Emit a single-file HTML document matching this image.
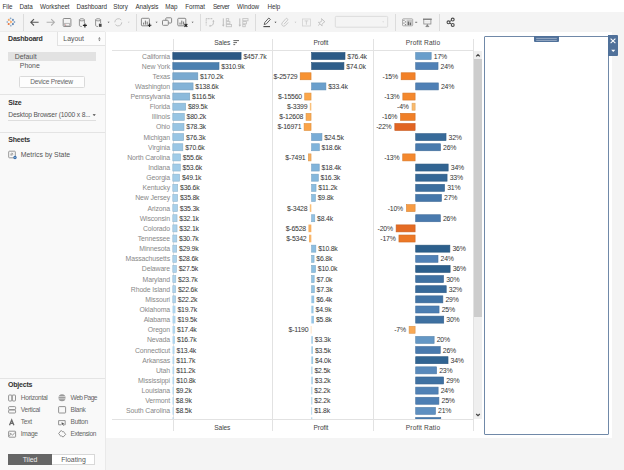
<!DOCTYPE html>
<html><head><meta charset="utf-8">
<style>
*{margin:0;padding:0;box-sizing:border-box}
html,body{width:624px;height:470px;overflow:hidden;background:#f4f4f4;font-family:"Liberation Sans",sans-serif;color:#333}
.a{position:absolute}
#menu{left:0;top:0;width:624px;height:11.5px;background:#fff}
.mi{position:absolute;top:2px;font-size:6.3px;line-height:9px;color:#333;letter-spacing:-0.05px}
#tool{left:0;top:11.5px;width:624px;height:20.5px;background:#f4f4f4}
.sep{position:absolute;top:14px;width:1px;height:16.5px;background:#dcdcdc}
#panel{left:0;top:32px;width:106px;height:438px;background:#f9f9f9;border-right:1px solid #e9e9e9}
#canvas{left:106px;top:32px;width:506px;height:406px;background:#fff}
.lab{position:absolute;right:454px;font-size:6.9px;line-height:10px;color:#888;white-space:nowrap;letter-spacing:-0.12px}
.val{position:absolute;font-size:6.9px;line-height:10px;color:#333;white-space:nowrap;letter-spacing:-0.2px}
.valr{position:absolute;font-size:6.9px;line-height:10px;color:#333;white-space:nowrap;letter-spacing:-0.2px;text-align:right}
.bar{position:absolute;height:7.6px}
#rows{left:0;top:51px;width:624px;height:368.5px;overflow:hidden}
#rows .lab,#rows .val,#rows .valr,#rows .bar{margin-top:-51px}
.hl{position:absolute;height:1px;background:#e2e2e2}
.vl{position:absolute;width:1px;background:#e2e2e2}
.hdr{position:absolute;font-size:6.6px;line-height:10px;color:#444;white-space:nowrap;letter-spacing:-0.1px}
.pt{position:absolute;font-size:6.9px;line-height:10px;color:#555;white-space:nowrap}
.pb{position:absolute;font-size:7px;line-height:10px;color:#333;font-weight:bold;white-space:nowrap;letter-spacing:-0.22px}
</style></head><body>
<div id="menu" class="a">
<div class="mi" style="left:2.5px">File</div>
<div class="mi" style="left:19.6px">Data</div>
<div class="mi" style="left:40px">Worksheet</div>
<div class="mi" style="left:76.6px">Dashboard</div>
<div class="mi" style="left:113.3px">Story</div>
<div class="mi" style="left:135.4px">Analysis</div>
<div class="mi" style="left:165.3px">Map</div>
<div class="mi" style="left:185.3px">Format</div>
<div class="mi" style="left:212.9px;letter-spacing:-0.35px">Server</div>
<div class="mi" style="left:237px">Window</div>
<div class="mi" style="left:267.5px">Help</div>
</div>
<div id="tool" class="a"></div>
<div class="sep" style="left:23px"></div>
<div class="sep" style="left:136px"></div>
<div class="sep" style="left:199.5px"></div>
<div class="sep" style="left:255px"></div>
<div class="sep" style="left:395px"></div>
<div class="sep" style="left:439px"></div>
<svg class="a" style="left:0;top:0" width="624" height="32" viewBox="0 0 624 32">
<g stroke-linecap="square">
<!-- tableau logo -->
<circle cx="8.8" cy="19.9" r="1.05" fill="#f4a868"/>
<path d="M10.2 20.3L12.6 21.9L10.2 23.5Z" fill="#f5a460"/>
<circle cx="8.7" cy="24" r="1.05" fill="#e8743a"/>
<circle cx="10.6" cy="18.3" r="0.9" fill="#8aa8c8"/>
<circle cx="12.9" cy="19.9" r="1.05" fill="#6e92bc"/>
<circle cx="14.4" cy="22" r="0.9" fill="#8aa8c8"/>
<circle cx="12.9" cy="24.1" r="1.05" fill="#5a82b2"/>
<circle cx="10.8" cy="25.7" r="0.9" fill="#9ab2cc"/>
<circle cx="7.3" cy="22" r="0.9" fill="#a2bad2"/>
</g>
<!-- back arrow -->
<path d="M38.6 22.3H30.8M34 19.1L30.8 22.3L34 25.5" fill="none" stroke="#555" stroke-width="1.1"/>
<!-- forward arrow -->
<path d="M46.6 22.3H54.4M51.2 19.1L54.4 22.3L51.2 25.5" fill="none" stroke="#b0b0b0" stroke-width="1.1"/>
<!-- save -->
<rect x="63.2" y="18.5" width="7.7" height="8" rx="0.9" fill="none" stroke="#8a8a8a" stroke-width="1"/>
<rect x="64.7" y="23.3" width="4.7" height="2.6" fill="none" stroke="#a0a0a0" stroke-width="0.7"/>
<circle cx="65.7" cy="25" r="0.5" fill="#c05050"/>
<!-- cyl plus -->
<path d="M79.4 19.8v5.6c0 .7 1.1 1.1 2.4 1.1M84.4 19.8v3.2" fill="none" stroke="#8a8a8a" stroke-width="0.9"/>
<ellipse cx="81.9" cy="19.8" rx="2.5" ry="1.1" fill="none" stroke="#8a8a8a" stroke-width="0.9"/>
<path d="M84.9 23.4v4M82.9 25.4h4" stroke="#222" stroke-width="1.2"/>
<!-- cyl square -->
<path d="M95.6 19.8v5.6c0 .7 1.1 1.1 2.4 1.1M100.6 19.8v3.2" fill="none" stroke="#8a8a8a" stroke-width="0.9"/>
<ellipse cx="98.1" cy="19.8" rx="2.5" ry="1.1" fill="none" stroke="#8a8a8a" stroke-width="0.9"/>
<rect x="98.9" y="23.7" width="2.7" height="3.1" fill="#444"/>
<path d="M107.6 21.8h2l-1 1.2z" fill="#555"/>
<!-- refresh light -->
<path d="M114.8 22.3a3.6 3.6 0 0 1 6.4-2.3M121.8 22.3a3.6 3.6 0 0 1-6.4 2.3" fill="none" stroke="#c4c4c4" stroke-width="1"/>
<path d="M127.8 21.8h1.8l-.9 1.1z" fill="#c4c4c4"/>
<!-- new worksheet -->
<rect x="141.4" y="18.3" width="8" height="7.5" rx="0.8" fill="none" stroke="#888" stroke-width="1"/>
<path d="M143.6 24.6v-2M145.4 24.6v-4M147.2 24.6v-3" stroke="#555" stroke-width="0.8"/>
<path d="M149.6 23.4v3.6M147.8 25.2h3.6" stroke="#222" stroke-width="1.1"/>
<path d="M155.6 21.8h2l-1 1.2z" fill="#555"/>
<!-- duplicate -->
<rect x="165.8" y="17.8" width="5.8" height="5.2" rx="0.8" fill="none" stroke="#888" stroke-width="1"/>
<rect x="162.5" y="20.3" width="5.8" height="5" rx="0.8" fill="#f4f4f4" stroke="#888" stroke-width="1"/>
<!-- clear sheet -->
<rect x="177.8" y="18.3" width="8" height="7.5" rx="0.8" fill="none" stroke="#888" stroke-width="1"/>
<path d="M180 24.6v-2M181.8 24.6v-4M183.6 24.6v-3" stroke="#555" stroke-width="0.8"/>
<path d="M184.5 24l2.8 2.8M187.3 24l-2.8 2.8" stroke="#222" stroke-width="1.1"/>
<path d="M191.6 21.8h2l-1 1.2z" fill="#555"/>
<!-- swap light -->
<path d="M206.2 18.6h6.6M206.2 18.6v6.8" fill="none" stroke="#c4c4c4" stroke-width="1.1" stroke-dasharray="1.1 .5"/>
<path d="M213.4 20.6v2.2c0 2-1.4 3.1-3.4 3.1" fill="none" stroke="#c0c0c0" stroke-width="1"/>
<path d="M212.2 21.6l1.2-1.6 1.2 1.6zM210.4 24.8l-1.6 1.1 1.6 1.1z" fill="#c0c0c0"/>
<!-- sort asc -->
<path d="M223.3 18.4v7.2" stroke="#bdbdbd" stroke-width="1"/>
<path d="M222 24.8l1.3 1.9 1.3-1.9z" fill="#bdbdbd"/>
<rect x="226.3" y="18.6" width="2.4" height="2.2" fill="none" stroke="#c4c4c4" stroke-width="0.9"/>
<rect x="226.3" y="21.6" width="3.6" height="2.2" fill="none" stroke="#c4c4c4" stroke-width="0.9"/>
<rect x="226.3" y="24.5" width="5.2" height="2.2" fill="none" stroke="#c4c4c4" stroke-width="0.9"/>
<!-- sort desc -->
<path d="M239.8 18.4v7.2" stroke="#bdbdbd" stroke-width="1"/>
<path d="M238.5 24.8l1.3 1.9 1.3-1.9z" fill="#bdbdbd"/>
<rect x="242.8" y="18.6" width="5.2" height="2.2" fill="none" stroke="#c4c4c4" stroke-width="0.9"/>
<rect x="242.8" y="21.6" width="3.6" height="2.2" fill="none" stroke="#c4c4c4" stroke-width="0.9"/>
<rect x="242.8" y="24.5" width="2.4" height="2.2" fill="none" stroke="#c4c4c4" stroke-width="0.9"/>
<!-- pen -->
<path d="M264.2 24.6l.6-2.2 4-4.4 1.6 1.4-4 4.4z" fill="none" stroke="#555" stroke-width="0.9"/>
<path d="M263.4 26.6h6.6" stroke="#444" stroke-width="1.1"/>
<path d="M274.5 21.8h2l-1 1.2z" fill="#333"/>
<!-- paperclip light -->
<path d="M284 24.2l3.6-4a1.2 1.2 0 0 0-1.7-1.6l-3.7 4.2a2.1 2.1 0 0 0 3 2.9l3-3.3" fill="none" stroke="#c4c4c4" stroke-width="0.9"/>
<path d="M294.6 21.8h1.8l-.9 1.1z" fill="#c4c4c4"/>
<!-- T box -->
<rect x="302.4" y="19" width="8" height="7" fill="none" stroke="#d2d2d2" stroke-width="0.8"/>
<path d="M304.6 20.9h3.6M306.4 20.9v3.8" stroke="#c4c4c4" stroke-width="0.7"/>
<!-- pin -->
<path d="M321.5 18.6l3.4 3.2-1.3.5-1.6 2.2.1 1.4-3.7-3.6 1.4.1 2.2-1.6z M319.6 24l-1.2 1.6" fill="none" stroke="#c0c0c0" stroke-width="0.9"/>
<!-- dropdown box -->
<rect x="335.3" y="16.4" width="52.4" height="10.8" rx="1" fill="#f4f4f4" stroke="#d9d9d9" stroke-width="0.9"/>
<path d="M382.2 21.5h2l-1 1.1z" fill="#cfcfcf"/>
<!-- show me -->
<rect x="402.5" y="18.8" width="10.2" height="7" rx="0.8" fill="none" stroke="#9a9a9a" stroke-width="0.8"/>
<path d="M403.3 19.8h1.2v1.2h-1.2zM404.9 21.2h1.2v1.2h-1.2zM403.3 22.6h1.2v1.2h-1.2zM404.9 24h1.2v1.2h-1.2z" fill="#8a8a8a"/>
<rect x="406.6" y="19.6" width="5.4" height="5.6" fill="#c8c8c8"/>
<path d="M408.3 25.2v-3.6M410.3 25.2v-2.6" stroke="#555" stroke-width="1"/>
<path d="M415.2 21.8h2v.9h-2z" fill="#666"/>
<!-- presentation -->
<path d="M423 19.2h8.7" stroke="#555" stroke-width="1.1"/>
<rect x="423.8" y="19.6" width="7.1" height="4.4" fill="none" stroke="#888" stroke-width="0.8"/>
<path d="M424.8 21.8h5.1" stroke="#ddd" stroke-width="0.6"/>
<path d="M427.35 24v1M425.8 26.6l1.55-1.6 1.55 1.6z" fill="#777" stroke="#777" stroke-width="0.7"/>
<!-- share -->
<circle cx="452.7" cy="19.6" r="1.45" fill="none" stroke="#4a4a4a" stroke-width="1.1"/>
<circle cx="448.5" cy="22.3" r="1.45" fill="none" stroke="#4a4a4a" stroke-width="1.1"/>
<circle cx="452.7" cy="24.9" r="1.45" fill="none" stroke="#4a4a4a" stroke-width="1.1"/>
<path d="M449.8 21.5l1.6-1.1M449.8 23.1l1.6 1" stroke="#4a4a4a" stroke-width="1"/>
</svg>

<div id="panel" class="a"></div>
<div class="a" style="left:56.8px;top:32.4px;width:48.2px;height:13.4px;border-left:1px solid #e2e2e2;border-bottom:1px solid #e2e2e2;background:#fcfcfc"></div>
<div class="hl" style="left:0;top:31px;width:105px;background:#ebebeb"></div>
<div class="pb" style="left:8.1px;top:34px">Dashboard</div>
<div class="pt" style="left:63.3px;top:34px;color:#555">Layout</div>
<div class="a" style="left:8px;top:52.3px;width:88px;height:9px;background:#e2e2e2"></div>
<div class="pt" style="left:14.8px;top:51.7px">Default</div>
<div class="pt" style="left:19.8px;top:60.9px">Phone</div>
<div class="a" style="left:19px;top:76.4px;width:65.6px;height:11.4px;background:#fdfdfd;border:1px solid #dadada;border-radius:1.5px"></div>
<div class="pt" style="left:18.5px;top:77.2px;width:66px;text-align:center;color:#666;font-size:6.6px;letter-spacing:-0.2px">Device Preview</div>
<div class="hl" style="left:0;top:94.4px;width:105px;background:#e4e4e4"></div>
<div class="pb" style="left:8.3px;top:97.6px">Size</div>
<div class="pt" style="left:8.3px;top:110px;color:#555;font-size:6.7px;letter-spacing:-0.15px">Desktop Browser (1000 x 8...</div>
<div class="hl" style="left:8px;top:120px;width:88px;background:#dedede"></div>
<div class="hl" style="left:0;top:132px;width:105px;background:#e4e4e4"></div>
<div class="pb" style="left:8.3px;top:134.6px">Sheets</div>
<div class="pt" style="left:20.8px;top:149.6px;color:#555">Metrics by State</div>
<div class="hl" style="left:0;top:377.5px;width:105px;background:#e4e4e4"></div>
<div class="pb" style="left:8.1px;top:380.3px">Objects</div>
<div class="pt" style="left:20.8px;top:393px;color:#666;font-size:6.6px;letter-spacing:-0.3px">Horizontal</div>
<div class="pt" style="left:20.8px;top:405px;color:#666;font-size:6.6px;letter-spacing:-0.3px">Vertical</div>
<div class="pt" style="left:20.8px;top:417px;color:#666;font-size:6.6px;letter-spacing:-0.3px">Text</div>
<div class="pt" style="left:20.8px;top:429.2px;color:#666;font-size:6.6px;letter-spacing:-0.3px">Image</div>
<div class="pt" style="left:70.6px;top:393px;color:#666;font-size:6.6px;letter-spacing:-0.55px">Web Page</div>
<div class="pt" style="left:70.6px;top:405px;color:#666;font-size:6.6px;letter-spacing:-0.3px">Blank</div>
<div class="pt" style="left:70.6px;top:417px;color:#666;font-size:6.6px;letter-spacing:-0.3px">Button</div>
<div class="pt" style="left:70.6px;top:429.2px;color:#666;font-size:6.6px;letter-spacing:-0.4px">Extension</div>
<div class="a" style="left:8px;top:454px;width:44px;height:11px;background:#666"></div>
<div class="a" style="left:52px;top:454px;width:43px;height:11px;background:#fff;border:1px solid #d8d8d8;border-left:none"></div>
<div class="pt" style="left:8px;top:454.5px;width:44px;text-align:center;color:#eee">Tiled</div>
<div class="pt" style="left:52px;top:454.5px;width:43px;text-align:center;color:#555">Floating</div>
<svg class="a" style="left:0;top:32px" width="105" height="438" viewBox="0 32 105 438">
<!-- layout spinner -->
<path d="M98.2 38.7l1.2-1.8 1.2 1.8zM98.2 39.4l1.2 1.8 1.2-1.8z" fill="#777"/>
<!-- size dropdown arrow -->
<path d="M92.6 114.3h3.2l-1.6 1.8z" fill="#444"/>
<!-- sheet icon -->
<rect x="8.7" y="151.2" width="6.6" height="6.6" rx="0.7" fill="#fbfbfb" stroke="#8c8c8c" stroke-width="0.9"/>
<circle cx="11.8" cy="154.2" r="1.1" fill="none" stroke="#888" stroke-width="0.6"/>
<path d="M10.6 155.6l2.4-2.8" stroke="#888" stroke-width="0.5"/>
<circle cx="15" cy="157.5" r="1.65" fill="#3a6fae"/>
<path d="M14.2 157.5h1.6" stroke="#cfe0f0" stroke-width="0.5"/>
<!-- horizontal -->
<rect x="8.6" y="395" width="3.3" height="6" rx="0.8" fill="none" stroke="#888" stroke-width="0.9"/>
<rect x="12.2" y="395" width="3.3" height="6" rx="0.8" fill="none" stroke="#888" stroke-width="0.9"/>
<!-- vertical -->
<rect x="8.6" y="406.6" width="7" height="3" rx="0.8" fill="none" stroke="#888" stroke-width="0.9"/>
<rect x="8.6" y="410" width="7" height="3" rx="0.8" fill="none" stroke="#888" stroke-width="0.9"/>
<!-- text A -->
<path d="M9.5 425.3l2.2-5.4 2.2 5.4M10.3 423.4h2.8" fill="none" stroke="#6a6a6a" stroke-width="1.3"/>
<!-- image -->
<rect x="8.6" y="431.2" width="7" height="6" rx="0.6" fill="none" stroke="#888" stroke-width="0.9"/>
<path d="M9.2 436.4l1.6-2.8 1.8 1.6 2.4-2.8M9.6 433.2l1.2 .4" fill="none" stroke="#888" stroke-width="0.8"/>
<!-- globe -->
<circle cx="62" cy="397.8" r="3.5" fill="#999"/>
<path d="M58.6 396.6h6.8M58.6 398.8h6.8" stroke="#f8f8f8" stroke-width="0.6"/>
<!-- blank -->
<rect x="58.6" y="406.6" width="7" height="6.4" rx="0.6" fill="none" stroke="#888" stroke-width="0.9"/>
<!-- button -->
<path d="M61 424.8h-2.4v-4.2h6.6v4.2h-1" fill="none" stroke="#888" stroke-width="0.9"/>
<path d="M61.6 422.2l2.8 1.6-1.2.3.9 1.4-.6.3-.8-1.3-1 .8z" fill="#555"/>
<!-- extension -->
<path d="M58.6 433.6l2.6-3.2 1.6 1.6c.5-.6 1.4-.4 1.5.4l.1.5 1.3 1.4-2.6 2.8-1.4-1.2c-.5.6-1.5.4-1.6-.4l-.1-.4z" fill="none" stroke="#888" stroke-width="0.9"/>
</svg>

<div id="canvas" class="a"></div>
<!-- grid -->
<div class="vl" style="left:172.5px;top:38.6px;height:392.6px"></div>
<div class="vl" style="left:272.3px;top:38.6px;height:392.6px"></div>
<div class="vl" style="left:373px;top:38.6px;height:392.6px"></div>
<div class="vl" style="left:473.3px;top:38.6px;height:392.6px"></div>
<div class="hdr" style="left:214.3px;top:38.4px">Sales</div>
<div class="hdr" style="left:313.5px;top:38.4px">Profit</div>
<div class="hdr" style="left:405.8px;top:38.4px;letter-spacing:0.15px">Profit Ratio</div>
<div class="hdr" style="left:214.3px;top:422.8px">Sales</div>
<div class="hdr" style="left:313.5px;top:422.8px">Profit</div>
<div class="hdr" style="left:405.8px;top:422.8px;letter-spacing:0.15px">Profit Ratio</div>
<svg class="a" style="left:0;top:51px" width="624" height="368.5" viewBox="0 51 624 368.5">
<rect x="172.80" y="52.50" width="68.28" height="7.00" fill="#2c5985" stroke="#274e75" stroke-width="0.6"/>
<rect x="311.64" y="52.50" width="33.36" height="7.00" fill="#2c5a86" stroke="#274f76" stroke-width="0.6"/>
<rect x="415.70" y="52.50" width="15.47" height="7.00" fill="#699ecb" stroke="#5c8bb3" stroke-width="0.6"/>
<rect x="172.80" y="62.64" width="46.19" height="7.00" fill="#4b80b0" stroke="#42719b" stroke-width="0.6"/>
<rect x="311.64" y="62.64" width="32.29" height="7.00" fill="#2f5e8a" stroke="#295379" stroke-width="0.6"/>
<rect x="415.70" y="62.64" width="22.32" height="7.00" fill="#5081b6" stroke="#4672a0" stroke-width="0.6"/>
<rect x="172.80" y="72.78" width="25.02" height="7.00" fill="#7aaad0" stroke="#6b96b7" stroke-width="0.6"/>
<rect x="300.20" y="72.78" width="10.84" height="7.00" fill="#f79232" stroke="#d9802c" stroke-width="0.6"/>
<rect x="401.14" y="72.78" width="13.96" height="7.00" fill="#f28128" stroke="#d57223" stroke-width="0.6"/>
<rect x="172.80" y="82.92" width="20.26" height="7.00" fill="#84b3d7" stroke="#749ebd" stroke-width="0.6"/>
<rect x="311.64" y="82.92" width="14.25" height="7.00" fill="#6a9fcc" stroke="#5d8cb4" stroke-width="0.6"/>
<rect x="415.70" y="82.92" width="22.61" height="7.00" fill="#4f80b5" stroke="#46719f" stroke-width="0.6"/>
<rect x="172.80" y="93.06" width="16.93" height="7.00" fill="#8cbadb" stroke="#7ba4c1" stroke-width="0.6"/>
<rect x="304.72" y="93.06" width="6.32" height="7.00" fill="#fba64a" stroke="#dd9241" stroke-width="0.6"/>
<rect x="402.84" y="93.06" width="12.26" height="7.00" fill="#f4882d" stroke="#d77828" stroke-width="0.6"/>
<rect x="172.80" y="103.20" width="12.87" height="7.00" fill="#95c2e1" stroke="#83abc6" stroke-width="0.6"/>
<rect x="309.83" y="102.90" width="1.51" height="7.6" fill="#fac07a"/>
<rect x="412.04" y="103.20" width="3.06" height="7.00" fill="#fbba6c" stroke="#dda45f" stroke-width="0.6"/>
<rect x="172.80" y="113.34" width="11.47" height="7.00" fill="#98c5e3" stroke="#86adc8" stroke-width="0.6"/>
<rect x="306.04" y="113.34" width="5.00" height="7.00" fill="#faa951" stroke="#dc9547" stroke-width="0.6"/>
<rect x="400.56" y="113.34" width="14.54" height="7.00" fill="#f07f27" stroke="#d37022" stroke-width="0.6"/>
<rect x="172.80" y="123.48" width="11.18" height="7.00" fill="#98c5e3" stroke="#86adc8" stroke-width="0.6"/>
<rect x="304.10" y="123.48" width="6.94" height="7.00" fill="#faa347" stroke="#dc8f3e" stroke-width="0.6"/>
<rect x="394.83" y="123.48" width="20.27" height="7.00" fill="#e16523" stroke="#c6591f" stroke-width="0.6"/>
<rect x="172.80" y="133.62" width="10.88" height="7.00" fill="#99c6e4" stroke="#87aec9" stroke-width="0.6"/>
<rect x="311.64" y="133.62" width="10.29" height="7.00" fill="#78acd6" stroke="#6a97bc" stroke-width="0.6"/>
<rect x="415.70" y="133.62" width="30.32" height="7.00" fill="#376a99" stroke="#305d87" stroke-width="0.6"/>
<rect x="172.80" y="143.76" width="10.03" height="7.00" fill="#9bc7e5" stroke="#88afca" stroke-width="0.6"/>
<rect x="311.64" y="143.76" width="7.67" height="7.00" fill="#80b4db" stroke="#719ec1" stroke-width="0.6"/>
<rect x="415.70" y="143.76" width="24.77" height="7.00" fill="#487aad" stroke="#3f6b98" stroke-width="0.6"/>
<rect x="172.80" y="153.90" width="7.77" height="7.00" fill="#a0cce8" stroke="#8db4cc" stroke-width="0.6"/>
<rect x="308.31" y="153.90" width="2.73" height="7.00" fill="#f8af5e" stroke="#da9a53" stroke-width="0.6"/>
<rect x="402.73" y="153.90" width="12.37" height="7.00" fill="#f4882d" stroke="#d77828" stroke-width="0.6"/>
<rect x="172.80" y="164.04" width="7.47" height="7.00" fill="#a1cce8" stroke="#8eb4cc" stroke-width="0.6"/>
<rect x="311.64" y="164.04" width="7.58" height="7.00" fill="#81b4db" stroke="#729ec1" stroke-width="0.6"/>
<rect x="415.70" y="164.04" width="32.46" height="7.00" fill="#316492" stroke="#2b5880" stroke-width="0.6"/>
<rect x="172.80" y="174.18" width="6.79" height="7.00" fill="#a3cee9" stroke="#8fb5cd" stroke-width="0.6"/>
<rect x="311.64" y="174.18" width="6.65" height="7.00" fill="#84b7dc" stroke="#74a1c2" stroke-width="0.6"/>
<rect x="415.70" y="174.18" width="31.37" height="7.00" fill="#346796" stroke="#2e5b84" stroke-width="0.6"/>
<rect x="172.80" y="184.32" width="4.91" height="7.00" fill="#a8d1eb" stroke="#94b8cf" stroke-width="0.6"/>
<rect x="311.64" y="184.32" width="4.38" height="7.00" fill="#8bbde0" stroke="#7aa6c5" stroke-width="0.6"/>
<rect x="415.70" y="184.32" width="28.87" height="7.00" fill="#3c6e9e" stroke="#35618b" stroke-width="0.6"/>
<rect x="172.80" y="194.46" width="4.79" height="7.00" fill="#a9d1eb" stroke="#95b8cf" stroke-width="0.6"/>
<rect x="311.64" y="194.46" width="3.76" height="7.00" fill="#8dbfe2" stroke="#7ca8c7" stroke-width="0.6"/>
<rect x="415.70" y="194.46" width="25.76" height="7.00" fill="#4577aa" stroke="#3d6996" stroke-width="0.6"/>
<rect x="172.80" y="204.60" width="4.71" height="7.00" fill="#a9d1eb" stroke="#95b8cf" stroke-width="0.6"/>
<rect x="309.82" y="204.30" width="1.52" height="7.6" fill="#fac079"/>
<rect x="406.35" y="204.60" width="8.75" height="7.00" fill="#f79b43" stroke="#d9883b" stroke-width="0.6"/>
<rect x="172.80" y="214.74" width="4.23" height="7.00" fill="#abd2eb" stroke="#96b9cf" stroke-width="0.6"/>
<rect x="311.64" y="214.74" width="3.13" height="7.00" fill="#90c1e3" stroke="#7faac8" stroke-width="0.6"/>
<rect x="415.70" y="214.74" width="24.60" height="7.00" fill="#497aae" stroke="#406b99" stroke-width="0.6"/>
<rect x="172.80" y="224.88" width="4.23" height="7.00" fill="#abd2eb" stroke="#96b9cf" stroke-width="0.6"/>
<rect x="308.44" y="224.58" width="2.90" height="7.6" fill="#f8b060"/>
<rect x="396.12" y="224.88" width="18.98" height="7.00" fill="#e46b24" stroke="#c95e20" stroke-width="0.6"/>
<rect x="172.80" y="235.02" width="4.02" height="7.00" fill="#abd2ec" stroke="#96b9d0" stroke-width="0.6"/>
<rect x="308.97" y="234.72" width="2.37" height="7.6" fill="#f9b66a"/>
<rect x="398.94" y="235.02" width="16.16" height="7.00" fill="#ec7826" stroke="#d06a21" stroke-width="0.6"/>
<rect x="172.80" y="245.16" width="3.90" height="7.00" fill="#acd2ec" stroke="#97b9d0" stroke-width="0.6"/>
<rect x="311.64" y="245.16" width="4.20" height="7.00" fill="#8cbee1" stroke="#7ba7c6" stroke-width="0.6"/>
<rect x="415.70" y="245.16" width="34.18" height="7.00" fill="#2c5f8c" stroke="#27547b" stroke-width="0.6"/>
<rect x="172.80" y="255.30" width="3.70" height="7.00" fill="#acd3ec" stroke="#97bad0" stroke-width="0.6"/>
<rect x="311.64" y="255.30" width="2.42" height="7.00" fill="#94c4e4" stroke="#82acc9" stroke-width="0.6"/>
<rect x="415.70" y="255.30" width="22.30" height="7.00" fill="#5081b6" stroke="#4672a0" stroke-width="0.6"/>
<rect x="172.80" y="265.44" width="3.54" height="7.00" fill="#add3ec" stroke="#98bad0" stroke-width="0.6"/>
<rect x="311.64" y="265.44" width="3.85" height="7.00" fill="#8dbfe1" stroke="#7ca8c6" stroke-width="0.6"/>
<rect x="415.70" y="265.44" width="34.42" height="7.00" fill="#2c5f8c" stroke="#27547b" stroke-width="0.6"/>
<rect x="172.80" y="275.58" width="2.97" height="7.00" fill="#aed4ed" stroke="#99bbd1" stroke-width="0.6"/>
<rect x="311.64" y="275.58" width="2.51" height="7.00" fill="#93c3e4" stroke="#81acc9" stroke-width="0.6"/>
<rect x="415.70" y="275.58" width="27.84" height="7.00" fill="#3f71a2" stroke="#37638f" stroke-width="0.6"/>
<rect x="172.80" y="285.72" width="2.80" height="7.00" fill="#afd4ed" stroke="#9abbd1" stroke-width="0.6"/>
<rect x="311.64" y="285.72" width="2.64" height="7.00" fill="#92c3e3" stroke="#80acc8" stroke-width="0.6"/>
<rect x="415.70" y="285.72" width="30.51" height="7.00" fill="#376999" stroke="#305c87" stroke-width="0.6"/>
<rect x="172.80" y="295.86" width="2.74" height="7.00" fill="#afd4ed" stroke="#9abbd1" stroke-width="0.6"/>
<rect x="311.34" y="295.56" width="2.84" height="7.6" fill="#95c4e4"/>
<rect x="415.70" y="295.86" width="27.16" height="7.00" fill="#4173a5" stroke="#396591" stroke-width="0.6"/>
<rect x="172.50" y="305.70" width="2.96" height="7.6" fill="#b0d5ed"/>
<rect x="311.34" y="305.70" width="2.18" height="7.6" fill="#98c7e5"/>
<rect x="415.70" y="306.00" width="23.35" height="7.00" fill="#4c7eb2" stroke="#436f9d" stroke-width="0.6"/>
<rect x="172.50" y="315.84" width="2.93" height="7.6" fill="#b0d5ed"/>
<rect x="311.34" y="315.84" width="2.58" height="7.6" fill="#96c5e5"/>
<rect x="415.70" y="316.14" width="28.04" height="7.00" fill="#3e70a1" stroke="#37638e" stroke-width="0.6"/>
<rect x="172.50" y="325.98" width="2.62" height="7.6" fill="#b1d6ed"/>
<rect x="310.81" y="325.98" width="0.53" height="7.6" fill="#fbca92"/>
<rect x="409.11" y="326.28" width="5.99" height="7.00" fill="#f9a955" stroke="#db954b" stroke-width="0.6"/>
<rect x="172.50" y="336.12" width="2.51" height="7.6" fill="#b1d6ee"/>
<rect x="311.34" y="336.12" width="1.47" height="7.6" fill="#9cc9e6"/>
<rect x="415.70" y="336.42" width="18.43" height="7.00" fill="#6497c5" stroke="#5885ad" stroke-width="0.6"/>
<rect x="172.50" y="346.26" width="2.02" height="7.6" fill="#b3d7ee"/>
<rect x="311.34" y="346.26" width="1.56" height="7.6" fill="#9cc9e6"/>
<rect x="415.70" y="346.56" width="24.55" height="7.00" fill="#497aae" stroke="#406b99" stroke-width="0.6"/>
<rect x="172.50" y="356.40" width="1.76" height="7.6" fill="#b4d7ee"/>
<rect x="311.34" y="356.40" width="1.78" height="7.6" fill="#9ac8e6"/>
<rect x="415.70" y="356.70" width="32.32" height="7.00" fill="#316492" stroke="#2b5880" stroke-width="0.6"/>
<rect x="172.50" y="366.54" width="1.69" height="7.6" fill="#b4d7ee"/>
<rect x="311.34" y="366.54" width="1.11" height="7.6" fill="#9ecae7"/>
<rect x="415.70" y="366.84" width="20.90" height="7.00" fill="#5889bb" stroke="#4d79a5" stroke-width="0.6"/>
<rect x="172.50" y="376.68" width="1.63" height="7.6" fill="#b4d7ee"/>
<rect x="311.34" y="376.68" width="1.42" height="7.6" fill="#9cc9e7"/>
<rect x="415.70" y="376.98" width="27.93" height="7.00" fill="#3f71a2" stroke="#37638f" stroke-width="0.6"/>
<rect x="172.50" y="386.82" width="1.38" height="7.6" fill="#b5d8ef"/>
<rect x="311.34" y="386.82" width="0.98" height="7.6" fill="#9fcbe7"/>
<rect x="415.70" y="387.12" width="22.43" height="7.00" fill="#5081b5" stroke="#46729f" stroke-width="0.6"/>
<rect x="172.50" y="396.96" width="1.34" height="7.6" fill="#b5d8ef"/>
<rect x="311.34" y="396.96" width="0.98" height="7.6" fill="#9fcbe7"/>
<rect x="415.70" y="397.26" width="23.20" height="7.00" fill="#4d7eb3" stroke="#446f9e" stroke-width="0.6"/>
<rect x="172.50" y="407.10" width="1.28" height="7.6" fill="#b5d8ef"/>
<rect x="311.34" y="407.10" width="0.80" height="7.6" fill="#a0cbe8"/>
<rect x="415.70" y="407.40" width="19.79" height="7.00" fill="#5e8fc0" stroke="#537ea9" stroke-width="0.6"/>
<rect x="172.50" y="417.24" width="1.13" height="7.6" fill="#b6d8ef"/>
<rect x="311.34" y="417.24" width="0.89" height="7.6" fill="#9fcbe7"/>
<rect x="415.70" y="417.54" width="25.08" height="7.00" fill="#4779ac" stroke="#3e6a97" stroke-width="0.6"/>
</svg>
<div id="rows" class="a">
<div class="lab" style="top:51.50px">California</div>
<div class="val" style="left:243.38px;top:51.50px">$457.7k</div>
<div class="val" style="left:347.30px;top:51.50px">$76.4k</div>
<div class="val" style="left:433.77px;top:51.50px">17%</div>
<div class="lab" style="top:61.64px">New York</div>
<div class="val" style="left:221.29px;top:61.64px">$310.9k</div>
<div class="val" style="left:346.23px;top:61.64px">$74.0k</div>
<div class="val" style="left:440.62px;top:61.64px">24%</div>
<div class="lab" style="top:71.78px">Texas</div>
<div class="val" style="left:200.12px;top:71.78px">$170.2k</div>
<div class="valr" style="right:326.60px;top:71.78px">$-25729</div>
<div class="valr" style="right:226.16px;top:71.78px">-15%</div>
<div class="lab" style="top:81.92px">Washington</div>
<div class="val" style="left:195.36px;top:81.92px">$138.6k</div>
<div class="val" style="left:328.19px;top:81.92px">$33.4k</div>
<div class="val" style="left:440.91px;top:81.92px">24%</div>
<div class="lab" style="top:92.06px">Pennsylvania</div>
<div class="val" style="left:192.03px;top:92.06px">$116.5k</div>
<div class="valr" style="right:322.08px;top:92.06px">$-15560</div>
<div class="valr" style="right:224.46px;top:92.06px">-13%</div>
<div class="lab" style="top:102.20px">Florida</div>
<div class="val" style="left:187.97px;top:102.20px">$89.5k</div>
<div class="valr" style="right:316.67px;top:102.20px">$-3399</div>
<div class="valr" style="right:215.26px;top:102.20px">-4%</div>
<div class="lab" style="top:112.34px">Illinois</div>
<div class="val" style="left:186.57px;top:112.34px">$80.2k</div>
<div class="valr" style="right:320.76px;top:112.34px">$-12608</div>
<div class="valr" style="right:226.74px;top:112.34px">-16%</div>
<div class="lab" style="top:122.48px">Ohio</div>
<div class="val" style="left:186.28px;top:122.48px">$78.3k</div>
<div class="valr" style="right:322.70px;top:122.48px">$-16971</div>
<div class="valr" style="right:232.47px;top:122.48px">-22%</div>
<div class="lab" style="top:132.62px">Michigan</div>
<div class="val" style="left:185.98px;top:132.62px">$76.3k</div>
<div class="val" style="left:324.23px;top:132.62px">$24.5k</div>
<div class="val" style="left:448.62px;top:132.62px">32%</div>
<div class="lab" style="top:142.76px">Virginia</div>
<div class="val" style="left:185.13px;top:142.76px">$70.6k</div>
<div class="val" style="left:321.61px;top:142.76px">$18.6k</div>
<div class="val" style="left:443.07px;top:142.76px">26%</div>
<div class="lab" style="top:152.90px">North Carolina</div>
<div class="val" style="left:182.87px;top:152.90px">$55.6k</div>
<div class="valr" style="right:318.49px;top:152.90px">$-7491</div>
<div class="valr" style="right:224.57px;top:152.90px">-13%</div>
<div class="lab" style="top:163.04px">Indiana</div>
<div class="val" style="left:182.57px;top:163.04px">$53.6k</div>
<div class="val" style="left:321.52px;top:163.04px">$18.4k</div>
<div class="val" style="left:450.76px;top:163.04px">34%</div>
<div class="lab" style="top:173.18px">Georgia</div>
<div class="val" style="left:181.89px;top:173.18px">$49.1k</div>
<div class="val" style="left:320.59px;top:173.18px">$16.3k</div>
<div class="val" style="left:449.67px;top:173.18px">33%</div>
<div class="lab" style="top:183.32px">Kentucky</div>
<div class="val" style="left:180.01px;top:183.32px">$36.6k</div>
<div class="val" style="left:318.32px;top:183.32px">$11.2k</div>
<div class="val" style="left:447.17px;top:183.32px">31%</div>
<div class="lab" style="top:193.46px">New Jersey</div>
<div class="val" style="left:179.89px;top:193.46px">$35.8k</div>
<div class="val" style="left:317.70px;top:193.46px">$9.8k</div>
<div class="val" style="left:444.06px;top:193.46px">27%</div>
<div class="lab" style="top:203.60px">Arizona</div>
<div class="val" style="left:179.81px;top:203.60px">$35.3k</div>
<div class="valr" style="right:316.68px;top:203.60px">$-3428</div>
<div class="valr" style="right:220.95px;top:203.60px">-10%</div>
<div class="lab" style="top:213.74px">Wisconsin</div>
<div class="val" style="left:179.33px;top:213.74px">$32.1k</div>
<div class="val" style="left:317.07px;top:213.74px">$8.4k</div>
<div class="val" style="left:442.90px;top:213.74px">26%</div>
<div class="lab" style="top:223.88px">Colorado</div>
<div class="val" style="left:179.33px;top:223.88px">$32.1k</div>
<div class="valr" style="right:318.06px;top:223.88px">$-6528</div>
<div class="valr" style="right:231.18px;top:223.88px">-20%</div>
<div class="lab" style="top:234.02px">Tennessee</div>
<div class="val" style="left:179.12px;top:234.02px">$30.7k</div>
<div class="valr" style="right:317.53px;top:234.02px">$-5342</div>
<div class="valr" style="right:228.36px;top:234.02px">-17%</div>
<div class="lab" style="top:244.16px">Minnesota</div>
<div class="val" style="left:179.00px;top:244.16px">$29.9k</div>
<div class="val" style="left:318.14px;top:244.16px">$10.8k</div>
<div class="val" style="left:452.48px;top:244.16px">36%</div>
<div class="lab" style="top:254.30px">Massachusetts</div>
<div class="val" style="left:178.80px;top:254.30px">$28.6k</div>
<div class="val" style="left:316.36px;top:254.30px">$6.8k</div>
<div class="val" style="left:440.60px;top:254.30px">24%</div>
<div class="lab" style="top:264.44px">Delaware</div>
<div class="val" style="left:178.64px;top:264.44px">$27.5k</div>
<div class="val" style="left:317.78px;top:264.44px">$10.0k</div>
<div class="val" style="left:452.72px;top:264.44px">36%</div>
<div class="lab" style="top:274.58px">Maryland</div>
<div class="val" style="left:178.07px;top:274.58px">$23.7k</div>
<div class="val" style="left:316.45px;top:274.58px">$7.0k</div>
<div class="val" style="left:446.14px;top:274.58px">30%</div>
<div class="lab" style="top:284.72px">Rhode Island</div>
<div class="val" style="left:177.90px;top:284.72px">$22.6k</div>
<div class="val" style="left:316.58px;top:284.72px">$7.3k</div>
<div class="val" style="left:448.81px;top:284.72px">32%</div>
<div class="lab" style="top:294.86px">Missouri</div>
<div class="val" style="left:177.84px;top:294.86px">$22.2k</div>
<div class="val" style="left:316.18px;top:294.86px">$6.4k</div>
<div class="val" style="left:445.46px;top:294.86px">29%</div>
<div class="lab" style="top:305.00px">Oklahoma</div>
<div class="val" style="left:177.46px;top:305.00px">$19.7k</div>
<div class="val" style="left:315.52px;top:305.00px">$4.9k</div>
<div class="val" style="left:441.65px;top:305.00px">25%</div>
<div class="lab" style="top:315.14px">Alabama</div>
<div class="val" style="left:177.43px;top:315.14px">$19.5k</div>
<div class="val" style="left:315.92px;top:315.14px">$5.8k</div>
<div class="val" style="left:446.34px;top:315.14px">30%</div>
<div class="lab" style="top:325.28px">Oregon</div>
<div class="val" style="left:177.12px;top:325.28px">$17.4k</div>
<div class="valr" style="right:315.69px;top:325.28px">$-1190</div>
<div class="valr" style="right:218.19px;top:325.28px">-7%</div>
<div class="lab" style="top:335.42px">Nevada</div>
<div class="val" style="left:177.01px;top:335.42px">$16.7k</div>
<div class="val" style="left:314.81px;top:335.42px">$3.3k</div>
<div class="val" style="left:436.73px;top:335.42px">20%</div>
<div class="lab" style="top:345.56px">Connecticut</div>
<div class="val" style="left:176.52px;top:345.56px">$13.4k</div>
<div class="val" style="left:314.90px;top:345.56px">$3.5k</div>
<div class="val" style="left:442.85px;top:345.56px">26%</div>
<div class="lab" style="top:355.70px">Arkansas</div>
<div class="val" style="left:176.26px;top:355.70px">$11.7k</div>
<div class="val" style="left:315.12px;top:355.70px">$4.0k</div>
<div class="val" style="left:450.62px;top:355.70px">34%</div>
<div class="lab" style="top:365.84px">Utah</div>
<div class="val" style="left:176.19px;top:365.84px">$11.2k</div>
<div class="val" style="left:314.45px;top:365.84px">$2.5k</div>
<div class="val" style="left:439.20px;top:365.84px">23%</div>
<div class="lab" style="top:375.98px">Mississippi</div>
<div class="val" style="left:176.13px;top:375.98px">$10.8k</div>
<div class="val" style="left:314.76px;top:375.98px">$3.2k</div>
<div class="val" style="left:446.23px;top:375.98px">29%</div>
<div class="lab" style="top:386.12px">Louisiana</div>
<div class="val" style="left:175.88px;top:386.12px">$9.2k</div>
<div class="val" style="left:314.32px;top:386.12px">$2.2k</div>
<div class="val" style="left:440.73px;top:386.12px">24%</div>
<div class="lab" style="top:396.26px">Vermont</div>
<div class="val" style="left:175.84px;top:396.26px">$8.9k</div>
<div class="val" style="left:314.32px;top:396.26px">$2.2k</div>
<div class="val" style="left:441.50px;top:396.26px">25%</div>
<div class="lab" style="top:406.40px">South Carolina</div>
<div class="val" style="left:175.78px;top:406.40px">$8.5k</div>
<div class="val" style="left:314.14px;top:406.40px">$1.8k</div>
<div class="val" style="left:438.09px;top:406.40px">21%</div>
<div class="lab" style="top:416.54px">Nebraska</div>
<div class="val" style="left:175.63px;top:416.54px">$7.5k</div>
<div class="val" style="left:314.23px;top:416.54px">$2.0k</div>
<div class="val" style="left:443.38px;top:416.54px">27%</div>
</div>
<div class="hl" style="left:111.5px;top:50px;width:362px"></div>
<div class="hl" style="left:111.5px;top:419px;width:362px"></div>
<!-- scrollbar -->
<div class="a" style="left:474px;top:51px;width:8px;height:368px;background:#efefef"></div>
<div class="a" style="left:474px;top:59.2px;width:8px;height:258px;background:#cdcdcd"></div>
<!-- floating container -->
<div class="a" style="left:484px;top:35.5px;width:125px;height:399.5px;border:1.5px solid #7089a8;border-radius:1px;background:#fff"></div>
<div class="a" style="left:534px;top:35.8px;width:25px;height:5.8px;background:#50719a;border-radius:0 0 1px 1px"></div>
<div class="a" style="left:608px;top:35.4px;width:10.3px;height:21px;background:#50719a;border-radius:0 1px 1px 0"></div>
<svg class="a" style="left:106px;top:32px" width="518" height="406" viewBox="106 32 518 406">
<!-- sort icon -->
<path d="M233.4 40.6h5.6M233.4 42.6h3.6M233.4 44.6h1.8" stroke="#555" stroke-width="0.9"/>
<!-- scroll arrows -->
<path d="M476.2 56.4l1.8-1.7 1.8 1.7" fill="none" stroke="#444" stroke-width="1.2"/>
<path d="M476.2 414l1.8 1.7 1.8-1.7" fill="none" stroke="#444" stroke-width="1.2"/>
<!-- handle lines -->
<path d="M536.2 38.4h20.6M536.2 40.4h20.6" stroke="#b4c3d6" stroke-width="0.7"/>
<!-- close X -->
<path d="M610.6 38.6l4.8 4.6M615.4 38.6l-4.8 4.6" stroke="#fff" stroke-width="1.1"/>
<path d="M611.2 49.8h4.1l-2.05 2.2z" fill="#fff"/>
</svg>
</body></html>
